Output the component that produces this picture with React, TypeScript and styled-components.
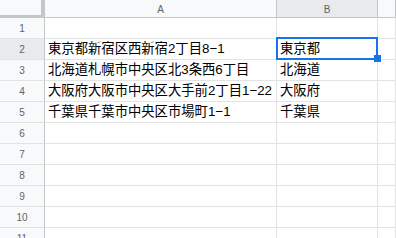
import React from "react";
import styled, { createGlobalStyle } from "styled-components";

const Global = createGlobalStyle`
  html, body { margin: 0; padding: 0; background: #fff; overflow: hidden; }
  #root { width: 396px; height: 238px; overflow: hidden; }
`;

const Sheet = styled.div`
  display: grid;
  grid-template-columns: 45px 232px 101px 1fr;
  grid-auto-rows: 21px;
  grid-template-rows: 18px;
  width: 396px;
  font-family: "Liberation Sans", Arial, "Noto Sans CJK JP", sans-serif;
`;

const Corner = styled.div`
  background: #f8f9fa;
  box-sizing: border-box;
  border-right: 4px solid #c4c7c5;
  border-bottom: 3px solid #c4c7c5;
`;

const ColHead = styled.div<{ $sel?: boolean }>`
  background: ${(p) => (p.$sel ? "#e8eaed" : "#f8f9fa")};
  box-sizing: border-box;
  border-right: 1px solid #c4c7c5;
  border-bottom: 1px solid #c4c7c5;
  display: flex;
  align-items: center;
  justify-content: center;
  font-size: 10px;
  color: #5f6368;
  padding-top: 1px;
`;

const RowHead = styled.div<{ $sel?: boolean }>`
  background: ${(p) => (p.$sel ? "#e8eaed" : "#f8f9fa")};
  box-sizing: border-box;
  border-right: 1px solid #c4c7c5;
  border-bottom: 1px solid #e2e3e3;
  display: flex;
  align-items: center;
  justify-content: center;
  font-size: 10px;
  color: #5f6368;
`;

const Cell = styled.div`
  position: relative;
  box-sizing: border-box;
  border-right: 1px solid #e2e3e3;
  border-bottom: 1px solid #e2e3e3;
  padding: 0 3px;
  font-size: 13.333px;
  line-height: 20px;
  color: #000;
  white-space: nowrap;
  display: flex;
  align-items: center;
`;

const Selection = styled.div`
  position: absolute;
  z-index: 2;
  left: -1px;
  top: -2px;
  right: -1px;
  bottom: -1px;
  border: 2px solid #1a73e8;
  pointer-events: none;
`;

const Handle = styled.div`
  position: absolute;
  right: -5px;
  bottom: -4px;
  width: 7px;
  height: 7px;
  background: #1a73e8;
`;

const rows: [string, string][] = [
  ["", ""],
  ["東京都新宿区西新宿2丁目8−1", "東京都"],
  ["北海道札幌市中央区北3条西6丁目", "北海道"],
  ["大阪府大阪市中央区大手前2丁目1−22", "大阪府"],
  ["千葉県千葉市中央区市場町1−1", "千葉県"],
  ["", ""],
  ["", ""],
  ["", ""],
  ["", ""],
  ["", ""],
  ["", ""],
];

export default function App() {
  return (
    <>
      <Global />
      <Sheet>
        <Corner />
        <ColHead>A</ColHead>
        <ColHead $sel>B</ColHead>
        <ColHead />
        {rows.map(([a, b], i) => (
          <React.Fragment key={i}>
            <RowHead $sel={i === 1}>{i + 1}</RowHead>
            <Cell>{a}</Cell>
            <Cell>
              {b}
              {i === 1 && (
                <Selection>
                  <Handle />
                </Selection>
              )}
            </Cell>
            <Cell />
          </React.Fragment>
        ))}
      </Sheet>
    </>
  );
}
